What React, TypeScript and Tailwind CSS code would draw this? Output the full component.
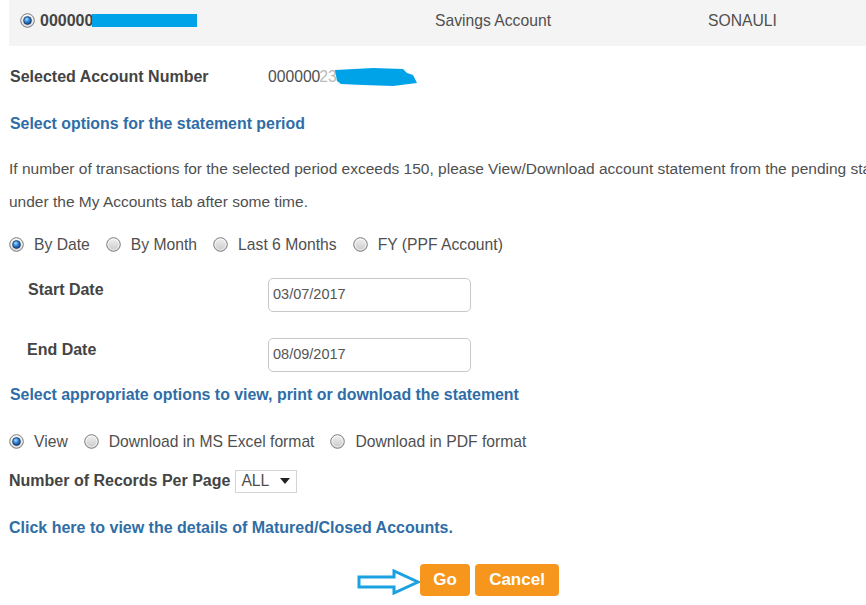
import React from 'react';

function Radio({ checked = false }: { checked?: boolean }) {
  return (
    <svg width="15" height="15" viewBox="0 0 15 15" className="shrink-0">
      <defs>
        <linearGradient id="rbg" x1="0" y1="0" x2="0" y2="1">
          <stop offset="0" stopColor="#f2f2f2" />
          <stop offset="1" stopColor="#c9c9c9" />
        </linearGradient>
        <radialGradient id="rdot" cx="0.4" cy="0.35" r="0.7">
          <stop offset="0" stopColor="#a8dcff" />
          <stop offset="0.5" stopColor="#2b80d6" />
          <stop offset="1" stopColor="#0b3c76" />
        </radialGradient>
      </defs>
      <circle cx="7.5" cy="7.5" r="6.8" fill="url(#rbg)" stroke="#7d7d7d" strokeWidth="1" />
      <circle cx="7.5" cy="7.5" r="5.4" fill="none" stroke="#ffffff" strokeWidth="0.8" opacity="0.7" />
      {checked && <circle cx="7.5" cy="7.5" r="3.9" fill="url(#rdot)" stroke="#1b3659" strokeWidth="0.7" />}
    </svg>
  );
}

function Option({ checked, label }: { checked?: boolean; label: string }) {
  return (
    <label className="flex items-center gap-[10px]">
      <Radio checked={checked} />
      <span>{label}</span>
    </label>
  );
}

export default function App() {
  return (
    <div className="w-[866px] h-[605px] overflow-hidden bg-white text-[15.7px] text-[#4f4f4f] font-['Liberation_Sans',Arial,sans-serif]">
      {/* account row */}
      <div className="ml-[9px] h-[46px] bg-[#f4f4f4] flex items-center pb-[5px]">
        <div className="w-[426px] flex items-center pl-[11px] gap-[5px]">
          <Radio checked />
          <span className="font-bold text-[16px] text-[#444]">000000</span>
          <span className="w-[105px] h-[13px] bg-[#00a2e8] -ml-[6px]" />
        </div>
        <div className="w-[273px]">Savings Account</div>
        <div>SONAULI</div>
      </div>

      <div className="mt-[15px] h-[32px] flex items-center pl-[10px]">
        <span className="w-[258px] font-bold text-[16px] text-[#444]">Selected Account Number</span>
        <span className="flex items-center">
          000000
          <span className="text-[#bbb] -ml-[1px]">23</span>
          <svg width="86" height="20" viewBox="0 0 86 20" className="-ml-[4px]">
            <path
              d="M2 3 L40 1 L70 2 L74 6 L80 8 L84 16 L60 19 L30 18 L8 17 L4 14 Z"
              fill="#00a2e8"
            />
          </svg>
        </span>
      </div>

      <div className="mt-[15px] h-[32px] flex items-center pl-[10px] font-bold text-[15.9px] text-[#2f6da6]">
        Select options for the statement period
      </div>

      <div className="mt-[12px] pl-[9px] leading-[33px] whitespace-nowrap text-[15.5px]">
        <div>
          If number of transactions for the selected period exceeds 150, please View/Download account statement from the pending sta
        </div>
        <div>under the My Accounts tab after some time.</div>
      </div>

      <div className="mt-[11px] h-[32px] flex items-center pl-[9px] gap-[16px]">
        <Option checked label="By Date" />
        <Option label="By Month" />
        <Option label="Last 6 Months" />
        <Option label="FY (PPF Account)" />
      </div>

      <div className="mt-[17px] flex pl-[28px]">
        <span className="w-[240px] h-[23px] leading-[23px] font-bold text-[16px] text-[#444]">Start Date</span>
        <div className="w-[203px] h-[34px] border border-[#c8c8c8] rounded-[5px] flex items-center pl-[4px] text-[14.5px] text-[#555]">
          03/07/2017
        </div>
      </div>

      <div className="mt-[26px] flex pl-[27px]">
        <span className="w-[241px] h-[23px] leading-[23px] font-bold text-[16px] text-[#444]">End Date</span>
        <div className="w-[203px] h-[34px] border border-[#c8c8c8] rounded-[5px] flex items-center pl-[4px] text-[14.5px] text-[#555]">
          08/09/2017
        </div>
      </div>

      <div className="mt-[7px] h-[32px] flex items-center pl-[10px] font-bold text-[15.9px] text-[#2f6da6]">
        Select appropriate options to view, print or download the statement
      </div>

      <div className="mt-[15px] h-[32px] flex items-center pl-[9px] gap-[16px]">
        <Option checked label="View" />
        <Option label="Download in MS Excel format" />
        <Option label="Download in PDF format" />
      </div>

      <div className="mt-[7px] h-[32px] flex items-center pl-[9px]">
        <span className="font-bold text-[16px] text-[#444] mr-[5px]">Number of Records Per Page</span>
        <div className="w-[62px] h-[23px] border border-[#d4d4d4] flex items-center pl-[5px] pr-[6px] justify-between">
          <span>ALL</span>
          <svg width="10" height="6" viewBox="0 0 10 6">
            <path d="M0 0 L10 0 L5 6 Z" fill="#222" />
          </svg>
        </div>
      </div>

      <div className="mt-[15px] h-[32px] flex items-center pl-[9px] font-bold text-[16px] text-[#2f6da6]">
        Click here to view the details of Matured/Closed Accounts.
      </div>

      <div className="mt-[20px] flex items-end pl-[357px]">
        <svg width="64" height="26" viewBox="0 0 64 26" className="mb-[1px]">
          <path
            d="M2 8 L37 8 L37 2 L61 13 L37 24 L37 18 L2 18 Z"
            fill="none"
            stroke="#1aa1e2"
            strokeWidth="3"
            strokeLinejoin="miter"
          />
        </svg>
        <button className="ml-[-1px] w-[50px] h-[32px] rounded-[4px] bg-[#f6961c] text-white font-bold text-[17px]">
          Go
        </button>
        <button className="ml-[5px] w-[84px] h-[32px] rounded-[4px] bg-[#f6961c] text-white font-bold text-[17px]">
          Cancel
        </button>
      </div>
    </div>
  );
}
